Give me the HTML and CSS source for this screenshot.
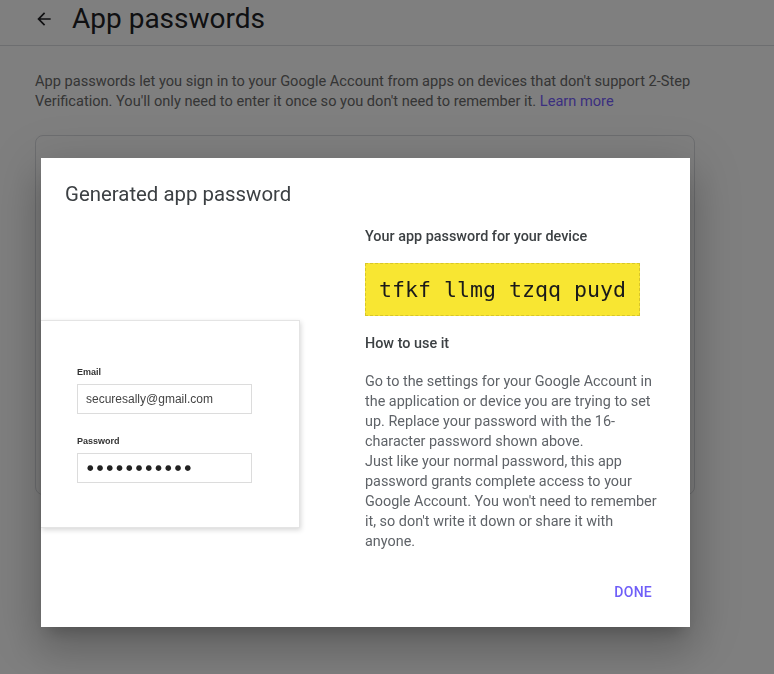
FILE: index.html
```html
<!DOCTYPE html>
<html lang="en">
<head>
<meta charset="utf-8">
<title>App passwords</title>
<link rel="stylesheet" href="styles.css">
</head>
<body>
<div class="page">
  <header class="topbar">
    <svg class="back" width="20" height="20" viewBox="0 0 24 24"><path d="M20 11H7.83l5.59-5.59L12 4l-8 8 8 8 1.41-1.41L7.83 13H20v-2z" fill="#202124"/></svg>
    <h1 class="page-title">App passwords</h1>
  </header>
  <main class="content">
    <p class="intro">App passwords let you sign in to your Google Account from apps on devices that don't support 2-Step Verification. You'll only need to enter it once so you don't need to remember it. <a class="link" href="#">Learn more</a></p>
    <section class="card"></section>
  </main>
</div>

<div class="scrim"></div>

<div class="dialog" role="dialog">
  <h2 class="dialog-title">Generated app password</h2>
  <div class="dialog-body">
    <div class="illustration">
      <div class="mock-form">
        <div class="mock-label">Email</div>
        <div class="mock-input">securesally@gmail.com</div>
        <div class="mock-label mock-label-2">Password</div>
        <div class="mock-input mock-dots">●●●●●●●●●●●</div>
      </div>
    </div>
    <div class="info">
      <div class="info-heading">Your app password for your device</div>
      <div class="pw-box">tfkf llmg tzqq puyd</div>
      <div class="info-heading how">How to use it</div>
      <p class="info-text">Go to the settings for your Google Account in<br>the application or device you are trying to set<br>up. Replace your password with the 16-<br>character password shown above.<br>Just like your normal password, this app<br>password grants complete access to your<br>Google Account. You won't need to remember<br>it, so don't write it down or share it with<br>anyone.</p>
    </div>
  </div>
  <div class="dialog-actions">
    <button class="done">Done</button>
  </div>
</div>
</body>
</html>
```

FILE: styles.css
```css
html, body {
  margin: 0;
  padding: 0;
  background: #ffffff;
  font-family: Roboto, "Liberation Sans", Arial, sans-serif;
}

.page {
  width: 774px;
  height: 674px;
  overflow: hidden;
}

.topbar {
  height: 46px;
  box-sizing: border-box;
  border-bottom: 1px solid #dadce0;
  display: flex;
  align-items: flex-start;
  padding-left: 34px;
}

.back {
  display: block;
  margin-top: 9px;
}

.page-title {
  margin: 0 0 0 18px;
  font-size: 28px;
  line-height: 38px;
  font-weight: 400;
  color: #202124;
}

.content {
  padding: 0 70px 0 35px;
}

.intro {
  margin: 25px 0 0;
  font-size: 14.6px;
  line-height: 20px;
  color: #6a6a6a;
}

.link {
  color: #765eff;
  text-decoration: none;
}

.card {
  margin-top: 24px;
  width: 658px;
  height: 358px;
  border: 1px solid #dadce0;
  border-radius: 8px;
}

.scrim {
  position: fixed;
  inset: 0;
  background: rgba(0, 0, 0, 0.5);
}

.dialog {
  position: absolute;
  left: 41px;
  top: 158px;
  width: 649px;
  height: 469px;
  background: #ffffff;
  box-shadow: 0 11px 15px -7px rgba(0,0,0,.2), 0 24px 38px 3px rgba(0,0,0,.14), 0 9px 46px 8px rgba(0,0,0,.12);
  display: flex;
  flex-direction: column;
  box-sizing: border-box;
}

.dialog-title {
  margin: 22px 0 0 24px;
  font-size: 20.4px;
  line-height: 28px;
  font-weight: 400;
  color: #3c4043;
}

.dialog-body {
  display: grid;
  grid-template-columns: 259px 1fr;
  column-gap: 65px;
  margin-top: 19px;
  padding-right: 10px;
}

.illustration {
  padding-top: 93px;
}

.mock-form {
  height: 208px;
  box-sizing: border-box;
  padding: 45px 0 0 36px;
  background: #ffffff;
  border: 1px solid #e4e4e4;
  border-left: none;
  box-shadow: 1px 2px 5px rgba(0, 0, 0, 0.16);
  font-family: "Liberation Sans", Arial, sans-serif;
}

.mock-label {
  font-size: 9px;
  line-height: 12px;
  font-weight: 700;
  color: #333333;
}

.mock-label-2 {
  margin-top: 21px;
}

.mock-input {
  margin-top: 6px;
  width: 175px;
  height: 30px;
  box-sizing: border-box;
  border: 1px solid #dcdcdc;
  padding: 0 8px;
  font-size: 12px;
  line-height: 28px;
  color: #444444;
}

.mock-dots {
  font-family: "DejaVu Sans", sans-serif;
  font-size: 7.5px;
  letter-spacing: 3.2px;
  color: #222222;
  padding-left: 9px;
}

.info {
  display: flex;
  flex-direction: column;
  align-items: flex-start;
}

.info-heading {
  font-size: 14.4px;
  line-height: 20px;
  font-weight: 500;
  color: #3c4043;
}

.pw-box {
  margin-top: 16px;
  background: #f8e632;
  border: 1px dashed #d8c62a;
  padding: 10px 13px;
  font-family: "DejaVu Sans Mono", "Liberation Mono", monospace;
  font-size: 21.6px;
  line-height: 31px;
  color: #1a1a1a;
  white-space: nowrap;
}

.how {
  margin-top: 18px;
}

.info-text {
  margin: 18px 0 0;
  font-size: 14.4px;
  line-height: 20px;
  color: #5f6368;
  white-space: nowrap;
}

.dialog-actions {
  margin-top: auto;
  display: flex;
  justify-content: flex-end;
  padding: 0 30px 17px 0;
}

.done {
  height: 36px;
  padding: 0 8px;
  border: none;
  background: transparent;
  font-family: Roboto, "Liberation Sans", sans-serif;
  font-size: 14px;
  font-weight: 500;
  letter-spacing: 0.25px;
  text-transform: uppercase;
  color: #6f5ef8;
  cursor: pointer;
}
```
